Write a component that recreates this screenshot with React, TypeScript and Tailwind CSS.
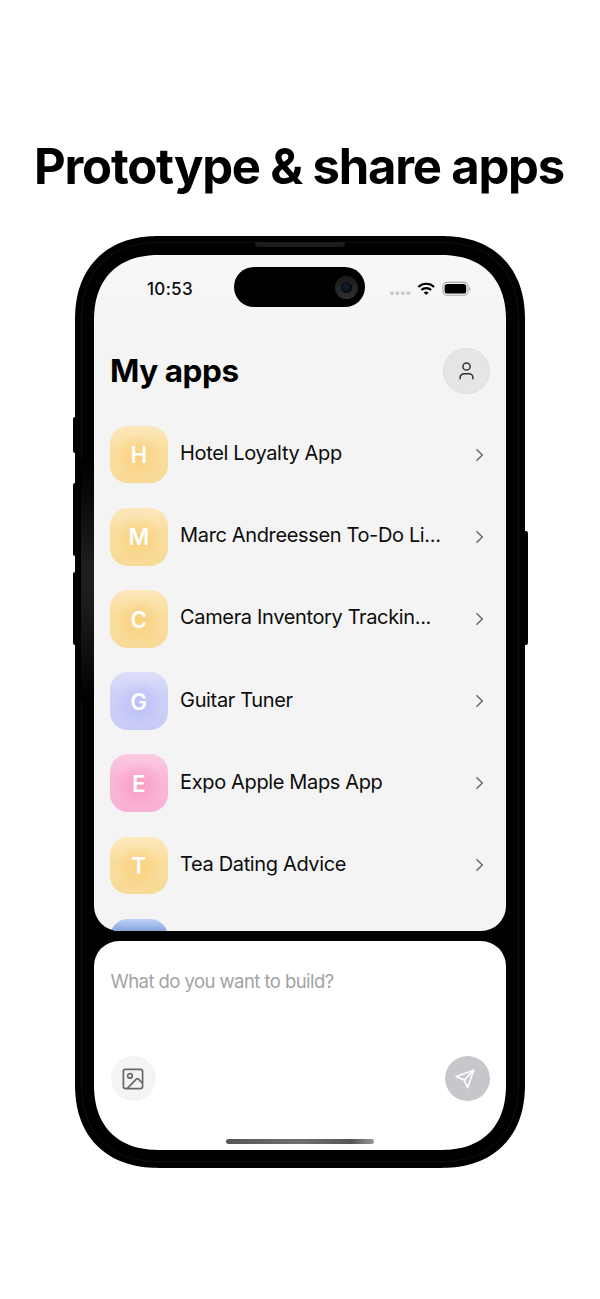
import React from "react";

type AppItem = { name: string; letter: string; tile: string };

const yellow =
  "bg-[radial-gradient(circle_at_50%_54%,#fad07c_0%,rgba(250,210,130,0.6)_28%,rgba(250,219,150,0)_56%),linear-gradient(#fce8bb,#fadd9d_42%,#f8da97)]";
const indigo =
  "bg-[radial-gradient(circle_at_50%_54%,#b9bef8_0%,rgba(190,194,248,0.6)_28%,rgba(200,203,247,0)_56%),linear-gradient(#dcdef9,#cdd0f7_42%,#c8cbf6)]";
const pink =
  "bg-[radial-gradient(circle_at_50%_54%,#fa9cc4_0%,rgba(250,160,200,0.6)_28%,rgba(250,178,211,0)_56%),linear-gradient(#fbcbe1,#fab6d6_42%,#f9b1d3)]";
const blue = "bg-[linear-gradient(#bdd2f8,#7f9fd8_24%,#7596d2)]";

const apps: AppItem[] = [
  { name: "Hotel Loyalty App", letter: "H", tile: yellow },
  { name: "Marc Andreessen To-Do Li...", letter: "M", tile: yellow },
  { name: "Camera Inventory Trackin...", letter: "C", tile: yellow },
  { name: "Guitar Tuner", letter: "G", tile: indigo },
  { name: "Expo Apple Maps App", letter: "E", tile: pink },
  { name: "Tea Dating Advice", letter: "T", tile: yellow },
  { name: "", letter: "", tile: blue },
];

function AppRow({ name, letter, tile }: AppItem) {
  return (
    <li className="flex h-[57.6px] shrink-0 items-center">
      <div
        className={`flex h-[57.6px] w-[57.6px] shrink-0 items-center justify-center rounded-[18px] pt-px text-[22.5px] font-semibold text-white ${tile}`}
      >
        {letter}
      </div>
      <span className="ml-[12.5px] flex-1 pb-[3px] text-[20px] leading-6 tracking-[-0.36px] whitespace-nowrap">
        {name}
      </span>
      {name && (
        <svg className="mr-[6px] h-[14px] w-[9px]" viewBox="0 0 9 14" fill="none" stroke="#6a6a6a" strokeWidth="1.5">
          <path d="M1.4 1.2 7.3 7l-5.9 5.8" />
        </svg>
      )}
    </li>
  );
}

function StatusBar() {
  return (
    <div className="flex h-[40px] items-center">
      <span className="ml-[53px] w-[87.4px] pt-[4px] text-[17px] leading-5 font-medium tracking-[0.3px]">10:53</span>
      <div className="flex h-[40px] w-[131px] shrink-0 items-center justify-end rounded-full bg-black pr-[7px]">
        <div className="flex h-[23px] w-[23px] items-center justify-center rounded-full bg-[linear-gradient(#191919,#303030)]">
          <div className="h-[11px] w-[11px] rounded-full bg-[radial-gradient(circle_at_45%_45%,#142438,#05070b_70%)]" />
        </div>
      </div>
      <svg className="mt-[3px] ml-[24.6px] h-[16px] w-[81px] shrink-0" viewBox="0 0 81 16" fill="none">
        <g fill="#c9c9c9">
          <circle cx="1.9" cy="12.2" r="1.9" />
          <circle cx="7.4" cy="12.2" r="1.9" />
          <circle cx="12.9" cy="12.2" r="1.9" />
          <circle cx="18.4" cy="12.2" r="1.9" />
        </g>
        <g stroke="#000" strokeWidth="2.1">
          <path d="M28.4 5.9a11.3 11.3 0 0 1 15.7 0" />
          <path d="M31.3 9.1a7.1 7.1 0 0 1 9.9 0" />
        </g>
        <path d="M36.2 14 33.8 11.6a3.5 3.5 0 0 1 4.8 0Z" fill="#000" />
        <rect x="52.9" y="1.4" width="25" height="12.8" rx="3.9" stroke="#a9a9a9" strokeWidth="1.1" />
        <rect x="54.6" y="3.1" width="21.6" height="9.4" rx="2.6" fill="#000" />
        <path d="M79.2 6a2.2 2.2 0 0 1 0 4Z" fill="#a0a0a0" />
      </svg>
    </div>
  );
}

export default function App() {
  return (
    <main className="flex h-[1299px] w-[600px] flex-col items-center overflow-hidden bg-white font-['Inter','Liberation_Sans',sans-serif] text-[#0c0c0c]">
      <h1 className="mt-[137px] -ml-[2px] h-[99px] text-[49px] leading-[60px] font-bold tracking-[-1.2px] whitespace-nowrap text-black">
        Prototype &amp; share apps
      </h1>
      <div className="relative h-[932px] w-[450px] shrink-0 rounded-[84px] bg-black px-[19px] pt-[19px] [corner-shape:superellipse(1.18)]">
        <div className="absolute top-[181px] -left-[2.5px] h-[36px] w-[4px] rounded-l-[2px] bg-black" />
        <div className="absolute top-[247px] -left-[2.5px] h-[73px] w-[4px] rounded-l-[2px] bg-black" />
        <div className="absolute top-[336px] -left-[2.5px] h-[73px] w-[4px] rounded-l-[2px] bg-black" />
        <div className="absolute top-[295px] -right-[2.5px] h-[114px] w-[4px] rounded-r-[2px] bg-black" />
        <div className="absolute inset-[6px] rounded-[78px] border border-[#0f0f0f] [corner-shape:superellipse(1.18)]" />
        <div className="absolute top-[225px] left-[6px] h-[240px] w-[13px] bg-[linear-gradient(#000,#1e1e1e_45%,#1c1c1c_60%,#000)]" />
        <div className="absolute top-[6px] left-[180px] h-[5px] w-[90px] rounded-b-[3px] bg-[#1b1b1b]" />

        <div className="relative flex flex-col gap-[10px]">
          <section className="h-[676px] overflow-hidden rounded-t-[66px] rounded-b-[25px] bg-[linear-gradient(#f8f8f8,#f4f4f4_80px)] pt-[12px] [corner-top-left-shape:superellipse(1.22)] [corner-top-right-shape:superellipse(1.22)]">
            <StatusBar />
            <header className="mt-[40px] flex h-[47px] items-center justify-between px-[16px]">
              <h2 className="text-[31.5px] leading-10 font-bold tracking-[-0.45px] text-black">My apps</h2>
              <button
                aria-label="Account"
                className="flex h-[46px] w-[47px] items-center justify-center rounded-full border border-[#dedede] bg-[#e5e5e5]"
              >
                <svg className="h-[18px] w-[15px]" viewBox="0 0 15 18" fill="none" stroke="#303030" strokeWidth="1.5" strokeLinecap="round">
                  <circle cx="7.5" cy="4.5" r="3.6" />
                  <path d="M1.1 16.8v-1.1A4 4 0 0 1 5.1 11.7h4.8a4 4 0 0 1 4 4v1.1" />
                </svg>
              </button>
            </header>
            <ul className="mt-[31.8px] flex flex-col gap-[24.55px] px-[16px]">
              {apps.map((app, i) => (
                <AppRow key={i} {...app} />
              ))}
            </ul>
          </section>

          <section className="flex h-[209px] flex-col overflow-hidden rounded-t-[25px] rounded-b-[66px] bg-white px-[16.5px] pt-[28px] [corner-bottom-left-shape:superellipse(1.22)] [corner-bottom-right-shape:superellipse(1.22)]">
            <p className="text-[18.5px] leading-6 tracking-[-0.56px] text-[#a3a3a3]">What do you want to build?</p>
            <div className="mt-[63px] flex justify-between">
              <button aria-label="Add image" className="flex h-[45px] w-[45px] items-center justify-center rounded-full bg-[#f4f4f4]">
                <svg className="h-[22px] w-[22px]" viewBox="0 0 22 22" fill="none" stroke="#696969" strokeWidth="1.7" strokeLinejoin="round">
                  <rect x="1.4" y="1.4" width="19.2" height="19.2" rx="2" />
                  <circle cx="7.9" cy="7.9" r="2.3" />
                  <path d="m5.3 20.4 9-9.3c.7-.8 1.5-.8 2.3 0l4 4.2" />
                </svg>
              </button>
              <button aria-label="Send" className="flex h-[45px] w-[45px] items-center justify-center rounded-full bg-[#c7c6cb]">
                <svg className="mr-[4px] h-[20px] w-[20px]" viewBox="0 0 20 20" fill="none" stroke="#fff" strokeWidth="1.6" strokeLinejoin="round">
                  <path d="M1.2 7.4 18.7 1.2l-6.1 17.5-3.4-7.6Z" />
                  <path d="m9.2 11.1 9.5-9.9" />
                </svg>
              </button>
            </div>
            <div className="mt-[38px] h-[5px] w-[147.5px] shrink-0 self-center rounded-full bg-[linear-gradient(90deg,#555,#707070_50%,#555_85%,#999)]" />
          </section>
        </div>
      </div>
    </main>
  );
}
